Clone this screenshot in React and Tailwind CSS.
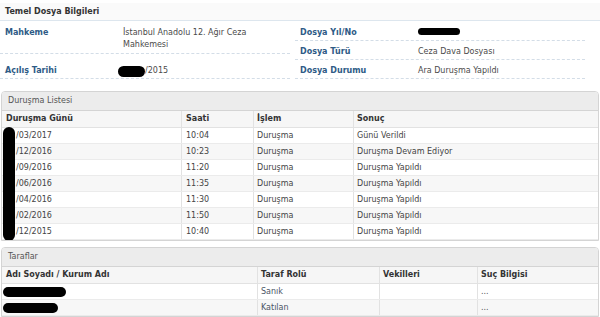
const HEARINGS = [
  { date: '/03/2017', time: '10:04', action: 'Duruşma', result: 'Günü Verildi' },
  { date: '/12/2016', time: '10:23', action: 'Duruşma', result: 'Duruşma Devam Ediyor' },
  { date: '/09/2016', time: '11:20', action: 'Duruşma', result: 'Duruşma Yapıldı' },
  { date: '/06/2016', time: '11:35', action: 'Duruşma', result: 'Duruşma Yapıldı' },
  { date: '/04/2016', time: '11:30', action: 'Duruşma', result: 'Duruşma Yapıldı' },
  { date: '/02/2016', time: '11:50', action: 'Duruşma', result: 'Duruşma Yapıldı' },
  { date: '/12/2015', time: '10:40', action: 'Duruşma', result: 'Duruşma Yapıldı' },
]

const PARTIES = [
  { name: 'w-[63px]', role: 'Sanık' },
  { name: 'w-[55px]', role: 'Katılan' },
]

// black marker blob used to hide personal data
function Redact({ className }) {
  return <span className={`inline-block bg-black rounded-full ${className}`} />
}

function InfoRow({ label, children, className = '' }) {
  return (
    <div className={`flex border-b border-dashed border-[#d3dde7] ${className}`}>
      <div className="w-[123px] pl-[5px] font-bold text-[#2e5b86]">{label}</div>
      <div className="flex-1 text-[#4a4a4a]">{children}</div>
    </div>
  )
}

function Panel({ title, children, className = '' }) {
  return (
    <div className={`mx-[1px] border border-[#d4d4d4] rounded-t-[4px] overflow-hidden ${className}`}>
      <div className="h-[19px] flex items-center px-[6px] bg-[#ececec] text-[#555] border-b border-[#d4d4d4]">
        {title}
      </div>
      {children}
    </div>
  )
}

export default function App() {
  return (
    <div className="w-[600px] h-[317px] overflow-hidden bg-white font-['DejaVu_Sans',sans-serif] text-[8px] leading-[12px]">
      {/* Temel Dosya Bilgileri */}
      <div className="mt-[3px] h-[18px] flex items-center px-[5px] bg-[#fafafa] border-b border-[#dde6ee] font-bold text-[#333]">
        Temel Dosya Bilgileri
      </div>
      <div className="flex gap-[5px]">
        <div className="w-[290px]">
          <InfoRow label="Mahkeme" className="h-[33px] pt-[6px]">
            İstanbul Anadolu 12. Ağır Ceza
            <br />
            Mahkemesi
          </InfoRow>
          <InfoRow label="Açılış Tarihi" className="h-[25px] pt-[11px]">
            <span className="flex items-center">
              <Redact className="w-[27px] h-[11px] -ml-[5px]" />
              /2015
            </span>
          </InfoRow>
        </div>
        <div className="w-[290px]">
          <InfoRow label="Dosya Yıl/No" className="h-[20px] pt-[6px]">
            <Redact className="w-[42px] h-[7px] mt-[1px]" />
          </InfoRow>
          <InfoRow label="Dosya Türü" className="h-[19px] pt-[5px]">
            Ceza Dava Dosyası
          </InfoRow>
          <InfoRow label="Dosya Durumu" className="h-[19px] pt-[5px]">
            Ara Duruşma Yapıldı
          </InfoRow>
        </div>
      </div>

      {/* Duruşma Listesi */}
      <Panel title="Duruşma Listesi" className="mt-[12px]">
        <div className="relative">
          <div className="grid grid-cols-[180px_72px_100px_1fr] h-[17px] items-center bg-[#f6f6f6] border-b border-[#e2e2e2] font-bold text-[#333]">
            <div className="pl-[4px] h-full flex items-center border-r border-[#e2e2e2]">Duruşma Günü</div>
            <div className="pl-[4px] h-full flex items-center border-r border-[#e2e2e2]">Saati</div>
            <div className="pl-[3px] h-full flex items-center border-r border-[#e2e2e2]">İşlem</div>
            <div className="pl-[3px] h-full flex items-center">Sonuç</div>
          </div>
          {HEARINGS.map((h, i) => (
            <div
              key={i}
              className={`grid grid-cols-[180px_72px_100px_1fr] h-[16px] text-[#444] border-b border-[#ebebeb] last:border-b-0 ${
                i % 2 ? 'bg-[#f7f7f7]' : 'bg-white'
              }`}
            >
              <div className="pl-[14px] flex items-center border-r border-[#e2e2e2]">{h.date}</div>
              <div className="pl-[4px] flex items-center border-r border-[#e2e2e2]">{h.time}</div>
              <div className="pl-[3px] flex items-center border-r border-[#e2e2e2]">{h.action}</div>
              <div className="pl-[3px] flex items-center">{h.result}</div>
            </div>
          ))}
          {/* marker stroke over the day numbers */}
          <div className="absolute left-[1px] top-[16px] w-[12px] h-[114px] bg-black rounded-[6px]" />
        </div>
      </Panel>

      {/* Taraflar */}
      <Panel title="Taraflar" className="mt-[6px]">
        <div className="grid grid-cols-[256px_122px_98px_1fr] h-[17px] bg-[#f6f6f6] border-b border-[#e2e2e2] font-bold text-[#333]">
          <div className="pl-[4px] flex items-center border-r border-[#e2e2e2]">Adı Soyadı / Kurum Adı</div>
          <div className="pl-[3px] flex items-center border-r border-[#e2e2e2]">Taraf Rolü</div>
          <div className="pl-[3px] flex items-center border-r border-[#e2e2e2]">Vekilleri</div>
          <div className="pl-[3px] flex items-center">Suç Bilgisi</div>
        </div>
        {PARTIES.map((p, i) => (
          <div
            key={i}
            className={`grid grid-cols-[256px_122px_98px_1fr] h-[16px] text-[#4b5566] border-b border-[#ebebeb] ${
              i % 2 ? 'bg-[#f7f7f7]' : 'bg-white'
            }`}
          >
            <div className="flex items-center border-r border-[#e2e2e2]">
              <Redact className={`${p.name} h-[10px] ml-[1px]`} />
            </div>
            <div className="pl-[3px] flex items-center border-r border-[#e2e2e2]">{p.role}</div>
            <div className="border-r border-[#e2e2e2]" />
            <div className="pl-[3px] flex items-center text-[#555]">...</div>
          </div>
        ))}
      </Panel>
    </div>
  )
}
